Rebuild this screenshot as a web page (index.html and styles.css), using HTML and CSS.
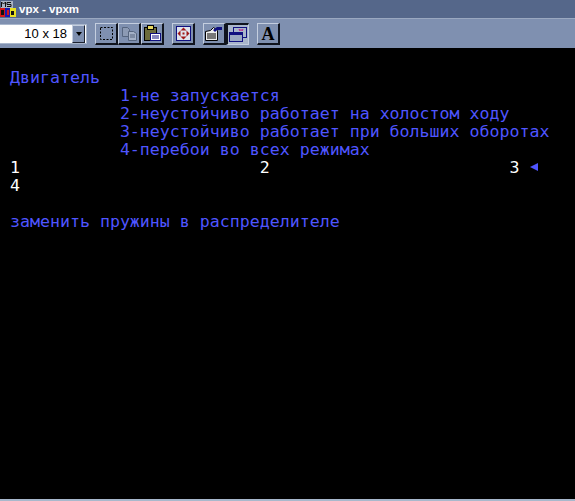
FILE: index.html
```html
<!DOCTYPE html>
<html>
<head>
<meta charset="UTF-8">
<title>vpx - vpxm</title>
<link rel="stylesheet" href="styles.css">
</head>
<body>
<div class="titlebar">
  <svg class="appicon" width="16" height="18" viewBox="0 0 16 18">
    <rect x="1" y="1" width="12" height="8" fill="#aab4c4"/>
    <rect x="0" y="8" width="6" height="9" fill="#d01818"/>
    <rect x="5" y="8" width="6" height="9" fill="#1818b0"/>
    <rect x="10" y="8" width="6" height="9" fill="#e8e020"/>
    <rect x="1" y="10" width="3" height="5" fill="#101010"/>
    <rect x="7" y="10" width="2" height="5" fill="#d01818"/>
    <rect x="11" y="11" width="3" height="4" fill="#101010"/>
    <path d="M1.500 7V2l2 2 2-2v5M7 2.500h4M7 2.500v2h4v2H7" fill="none" stroke="#101010" stroke-width="1"/>
  </svg>
  <span class="title">vpx - vpxm</span>
</div>
<div class="toolbar">
  <div class="fontsize">
    <span class="fontsize-value">10 x 18</span>
    <span class="dropbtn"><i class="droparrow"></i></span>
  </div>
  <div class="group">
    <span class="btn">
      <svg width="15" height="15" viewBox="0 0 15 15"><rect x="1.500" y="1.500" width="12" height="12" fill="none" stroke="#000" stroke-dasharray="2 1.500"/></svg>
    </span>
    <span class="btn">
      <svg width="17" height="15" viewBox="0 0 17 15"><path d="M1.500 1.500h5l2 2v7h-7z" fill="#8c9ab4" stroke="#56657f"/><path d="M7.500 5.500h5l3 2v7h-8z" fill="#a4b0c6" stroke="#56657f"/><path d="M9 9h5M9 11h5" stroke="#56657f"/></svg>
    </span>
    <span class="btn">
      <svg width="17" height="17" viewBox="0 0 17 17"><rect x="0.500" y="2.500" width="12" height="13" fill="#6c6c3c" stroke="#000"/><rect x="3.500" y="0.500" width="6" height="4" fill="#e8d860" stroke="#000"/><rect x="6.500" y="8.500" width="10" height="7" fill="#fff" stroke="#101080"/><path d="M8 11h7M8 13h7" stroke="#101080"/></svg>
    </span>
  </div>
  <div class="group">
    <span class="btn">
      <svg width="15" height="15" viewBox="0 0 15 15"><rect x="0.500" y="0.500" width="14" height="14" fill="#dfe4ee" stroke="#101080"/><path d="M7.500 1.500l3 3h-6zM7.500 13.500l3-3h-6zM1.500 7.500l3-3v6zM13.500 7.500l-3-3v6z" fill="#a01818"/><rect x="6.500" y="6.500" width="2" height="2" fill="#a01818"/></svg>
    </span>
  </div>
  <div class="group">
    <span class="btn">
      <svg width="18" height="15" viewBox="0 0 18 15"><path d="M0.500 5.500l5-1 3-3 4 3v10h-12z" fill="#eee" stroke="#000"/><path d="M2 8h9M2 10h9M2 12h9" stroke="#000"/><path d="M8 4l4-3h5v3h-5l-2 2z" fill="#101080"/></svg>
    </span>
    <span class="btn btn-on">
      <svg width="18" height="15" viewBox="0 0 18 15"><rect x="4.500" y="0.500" width="13" height="10" fill="none" stroke="#101080"/><rect x="0.500" y="5.500" width="13" height="9" fill="#9aa8c2" stroke="#101080"/><rect x="1" y="6" width="12" height="2" fill="#101080"/><path d="M10 2l1 2M12 2v2M14 2l-1 2" stroke="#c01880"/></svg>
    </span>
  </div>
  <div class="group">
    <span class="btn btn-font">A</span>
  </div>
</div>
<div class="screen">
  <div class="row"> Двигатель</div>
  <div class="row">            1-не запускается</div>
  <div class="row">            2-неустойчиво работает на холостом ходу</div>
  <div class="row">            3-неустойчиво работает при больших оборотах</div>
  <div class="row">            4-перебои во всех режимах</div>
  <div class="row white"> 1                        2                        3 <i class="cursor"></i></div>
  <div class="row white"> 4</div>
  <div class="row"> </div>
  <div class="row"> заменить пружины в распределителе</div>
</div>
<div class="statusline"></div>
</body>
</html>
```
FILE: styles.css
```css
html, body { margin: 0; height: 100%; }
body { display: flex; flex-direction: column; background: #000; overflow: hidden; }

.titlebar { height: 19px; background: #55678a; display: flex; align-items: center; box-sizing: border-box; border-bottom: 1px solid #9aa8c0; flex: none; }
.appicon { margin: 0 3px 0 0; flex: none; }
.title { color: #fff; font: bold 11.5px "Liberation Sans", sans-serif; }

.toolbar { height: 29px; background: #7f90b0; display: flex; align-items: flex-start; flex: none; box-sizing: border-box; padding-top: 4px; }
.fontsize { width: 87px; height: 20px; display: flex; box-sizing: border-box; border: 1px solid #a8b6cc; border-left: 0; margin-top: 1px; margin-right: 8px; background: #fff; }
.fontsize-value { flex: 1; text-align: right; padding-right: 5px; color: #000; font: 13px/18px "Liberation Sans", sans-serif; box-sizing: border-box; white-space: nowrap; }
.dropbtn { width: 13px; margin-right: 1px; background: #7f90b0; border: 1px solid; border-color: #c4cedf #1c2230 #1c2230 #c4cedf; box-sizing: border-box; display: flex; align-items: center; justify-content: center; }
.droparrow { width: 0; height: 0; border: 3px solid transparent; border-top: 4px solid #000; border-bottom: 0; }

.group { display: flex; margin-right: 8px; }
.btn { width: 23px; height: 22px; box-sizing: border-box; display: flex; align-items: center; justify-content: center; border: solid; border-width: 1px 2px 2px 1px; border-color: #c4cedf #10141e #10141e #c4cedf; background: #7f90b0; }
.btn-on { border-width: 2px 1px 1px 2px; border-color: #10141e #c4cedf #c4cedf #10141e; background: #a9b6cb; }
.btn-font { font: bold 18px/18px "Liberation Serif", serif; color: #000; }

.screen { flex: 1; padding-top: 21px; color: #4f55ff; font: 16.6px/18px "DejaVu Sans Mono", monospace; }
.row { height: 18px; white-space: pre; }
.white { color: #fff; }
.cursor { display: inline-block; width: 0; height: 0; border: 4px solid transparent; border-right: 8px solid #4f55ff; border-left: 0; vertical-align: 2px; }

.statusline { height: 2px; background: #a8b8cc; flex: none; }
```
